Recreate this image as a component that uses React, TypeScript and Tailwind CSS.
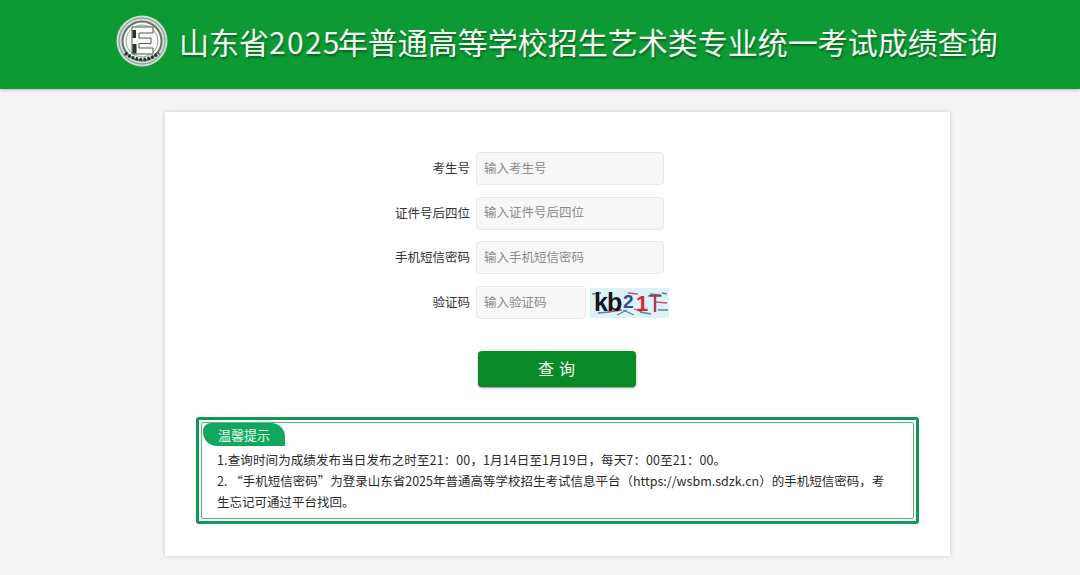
import React from 'react';

const fields = [
  { label: '考生号', placeholder: '输入考生号' },
  { label: '证件号后四位', placeholder: '输入证件号后四位' },
  { label: '手机短信密码', placeholder: '输入手机短信密码' },
];

const fontStack = { fontFamily: '"Noto Sans CJK SC", "Noto Sans", sans-serif' };

function Logo() {
  return (
    <svg width="52" height="52" viewBox="0 0 52 52" className="shrink-0">
      <circle cx="26" cy="26" r="25.5" fill="#d3dcd5" />
      <circle cx="26" cy="26" r="23" fill="none" stroke="#7f8f83" strokeWidth="1" />
      <circle cx="26" cy="26" r="20.5" fill="#66766a" />
      <circle cx="26" cy="26" r="18.5" fill="#f6f8f4" />
      <circle cx="26" cy="26" r="16" fill="none" stroke="#9aa69d" strokeWidth="1" />
      <path d="M16 12h21v6H23v5h12v5.500H23V33h14v6H16z" fill="#fbfcf9" stroke="#4a5a50" strokeWidth="1" />
      <path d="M16.500 15h3.500v8h-3.500zM16.500 29h4v9.500h-4z" fill="#26362d" />
      <path d="M9 38q17 13 34 0" fill="none" stroke="#22352a" strokeWidth="3.500" strokeDasharray="2.400 1.600" />
    </svg>
  );
}

function Captcha() {
  return (
    <svg width="79" height="30" viewBox="0 0 79 30" className="shrink-0">
      <rect width="79" height="30" fill="#dcf2f6" />
      <path d="M2 6l9-1M8 25l11-1M27 27l10-5M33 22l11 5M50 24l11 2M60 6l11 1M68 22l10 0M72 5l5 1" stroke="#5f8290" strokeWidth="1.300" fill="none" />
      <path d="M18 24l14-2M38 5l10 1M66 14l11 1M44 21l8 3" stroke="#c4566a" strokeWidth="1.300" fill="none" />
      <text x="4" y="23" fontSize="25" fontWeight="700" fill="#14141c" fontFamily="Liberation Sans, sans-serif" letterSpacing="-1">kb</text>
      <text x="33" y="20" fontSize="19" fontWeight="700" fill="#34479a" fontFamily="Liberation Sans, sans-serif">2</text>
      <text x="46" y="23" fontSize="22" fontWeight="700" fill="#cc2a3e" fontFamily="Liberation Sans, sans-serif">1</text>
      <text x="58" y="24" fontSize="23" fill="#a5364a" fontFamily="Liberation Sans, sans-serif">T</text>
    </svg>
  );
}

export default function App() {
  return (
    <div className="h-[575px] overflow-hidden bg-[#f5f5f5]" style={fontStack}>
      {/* Header */}
      <header className="h-[89px] bg-[#0d9a33] shadow-[0_1px_3px_rgba(0,0,0,0.25)] flex items-center pl-[116px] gap-[11px] pb-[7px]">
        <Logo />
        <h1 className="text-[30px] leading-none font-normal text-[#f4fbf2] whitespace-nowrap [text-shadow:1px_2px_2px_rgba(0,60,20,0.55)]">
          山东省<span className="tracking-[1.3px] mr-[-3px]">2025</span>年普通高等学校招生艺术类专业统一考试成绩查询
        </h1>
      </header>

      {/* Card */}
      <main className="mt-[23px] ml-[165px] w-[785px] h-[444px] bg-white shadow-[0_0_5px_rgba(0,0,0,0.18)] pt-[40px] px-[31px]">
        <form className="flex flex-col gap-[11.67px] pl-[194px]">
          {fields.map((f) => (
            <div key={f.label} className="flex items-center gap-[6px]">
              <label className="w-[80px] text-right text-[12.5px] text-[#333] whitespace-nowrap">{f.label}</label>
              <div className="w-[188px] h-[33px] bg-[#f7f7f7] border border-[#e8e8e8] rounded-[4px] flex items-center pl-[7px] pb-[1px] text-[12.5px] text-[#8b8b8b]">
                {f.placeholder}
              </div>
            </div>
          ))}
          <div className="flex items-center gap-[6px]">
            <label className="w-[80px] text-right text-[12.5px] text-[#333]">验证码</label>
            <div className="w-[110px] h-[33px] bg-[#f7f7f7] border border-[#e8e8e8] rounded-[4px] flex items-center pl-[7px] pb-[1px] text-[12.5px] text-[#8b8b8b]">
              输入验证码
            </div>
            <div className="ml-[-2px] mt-[2px]">
              <Captcha />
            </div>
          </div>
        </form>

        <button className="block mt-[32px] ml-[282px] w-[158px] h-[36px] bg-[#0a8a26] rounded-[4px] shadow-[0_1px_2px_rgba(0,0,0,0.45)] text-[#eef8ee] text-[16px] tracking-[5px] pl-[4px] pb-[2px]">
          查询
        </button>

        {/* Notice */}
        <section className="mt-[30px] w-[723px] h-[107px] border-[3px] border-[#0e9a55] rounded-[3px] p-[2px]">
          <div className="h-full border border-[#57b585] rounded-[2px] pl-[1px]">
            <div className="w-[82px] h-[23px] bg-[#0fa85c] rounded-tl-[8px] rounded-tr-[14px] rounded-bl-[14px] flex items-center pl-[15px] text-[13px] text-[#e9f8ef]">
              温馨提示
            </div>
            <div className="pl-[14px] pr-[24px] pt-[3px] text-[12.5px] leading-[21px] text-[#2a2a2a]">
              <p className="tracking-[0.12px]">1.查询时间为成绩发布当日发布之时至21：00，1月14日至1月19日，每天7：00至21：00。</p>
              <p>2. “手机短信密码”为登录山东省2025年普通高等学校招生考试信息平台（https://wsbm.sdzk.cn）的手机短信密码，考生忘记可通过平台找回。</p>
            </div>
          </div>
        </section>
      </main>
    </div>
  );
}
